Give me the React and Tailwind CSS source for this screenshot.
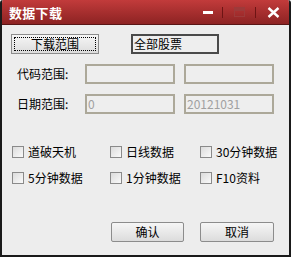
export default function App() {
  const font = { fontFamily: '"Noto Sans CJK SC", "Liberation Sans", sans-serif' };
  const Check = ({ label }) => (
    <div className="flex items-center gap-[4px] h-[14px]">
      <div className="w-[12px] h-[12px] border border-[#8a8a8a] bg-gradient-to-br from-[#dcdcdc] to-[#fafafa]"></div>
      <span className="text-[12px] leading-[14px] text-black">{label}</span>
    </div>
  );
  return (
    <div className="w-[291px] h-[257px] flex flex-col bg-[#ededed] border-l-2 border-r-2 border-b-2 border-[#1a1a1a] rounded-t-[3px] overflow-hidden" style={font}>
      <div className="h-[25px] flex items-center bg-gradient-to-b from-[#c23b3b] to-[#8d2323] border-b border-[#5a1515] shrink-0">
        <span className="ml-[7px] text-white font-bold text-[13px] leading-none tracking-[0.3px]">数据下载</span>
        <div className="ml-auto flex items-center h-full">
          <div className="w-[10px] h-[3px] bg-white mr-[9px]"></div>
          <div className="w-[1px] h-[11px] bg-[#6e1414] mr-[11px]"></div>
          <div className="w-[11px] h-[10px] border border-[#9e3a3a] flex flex-col mr-[10px]">
            <div className="h-[3px] bg-[#9e3a3a]"></div>
          </div>
          <div className="w-[1px] h-[11px] bg-[#6e1414] mr-[11px]"></div>
          <svg width="13" height="11" viewBox="0 0 13 11" className="mr-[9px]">
            <path d="M1.5 1 L11.5 10 M11.5 1 L1.5 10" stroke="white" strokeWidth="2.4" />
          </svg>
        </div>
      </div>
      <div className="flex items-center mt-[9px] ml-[9px]">
        <div className="w-[88px] h-[20px] border border-[#8c8c8c] bg-gradient-to-b from-[#f6f6f6] to-[#dcdcdc] p-[2px]">
          <div className="w-full h-full border border-dotted border-black flex items-center justify-center text-[12px] leading-none text-black">下载范围</div>
        </div>
        <div className="ml-[32px] w-[88px] h-[20px] border-2 border-[#4a4a4a] bg-[#eeeeee] flex items-center pl-[1px] text-[12px] leading-none text-black">全部股票</div>
      </div>
      <div className="flex items-center mt-[10px]">
        <span className="ml-[15px] w-[68px] text-[12px] leading-none text-black">代码范围:</span>
        <div className="w-[90px] h-[20px] border-2 border-[#aca899] bg-[#eeeeee]"></div>
        <div className="ml-[9px] w-[90px] h-[20px] border-2 border-[#aca899] bg-[#eeeeee]"></div>
      </div>
      <div className="flex items-center mt-[10px]">
        <span className="ml-[15px] w-[68px] text-[12px] leading-none text-black">日期范围:</span>
        <div className="w-[90px] h-[20px] border-2 border-[#aca899] bg-[#eeeeee] flex items-center pl-[1px] text-[12px] leading-none text-[#a0a0a0]">0</div>
        <div className="ml-[9px] w-[90px] h-[20px] border-2 border-[#aca899] bg-[#eeeeee] flex items-center pl-[1px] text-[12px] leading-none text-[#a0a0a0]">20121031</div>
      </div>
      <div className="grid grid-cols-[98px_90px_1fr] ml-[10px] mt-[31px] gap-y-[12px]">
        <Check label="道破天机" />
        <Check label="日线数据" />
        <Check label="30分钟数据" />
        <Check label="5分钟数据" />
        <Check label="1分钟数据" />
        <Check label="F10资料" />
      </div>
      <div className="flex mt-[37px] ml-[109px]">
        <div className="w-[73px] h-[20px] border border-[#8c8c8c] rounded-[2px] bg-gradient-to-b from-[#f6f6f6] to-[#dcdcdc] flex items-center justify-center text-[12px] leading-none text-black">确认</div>
        <div className="ml-[16px] w-[74px] h-[20px] border border-[#8c8c8c] rounded-[2px] bg-gradient-to-b from-[#f6f6f6] to-[#dcdcdc] flex items-center justify-center text-[12px] leading-none text-black">取消</div>
      </div>
    </div>
  );
}
